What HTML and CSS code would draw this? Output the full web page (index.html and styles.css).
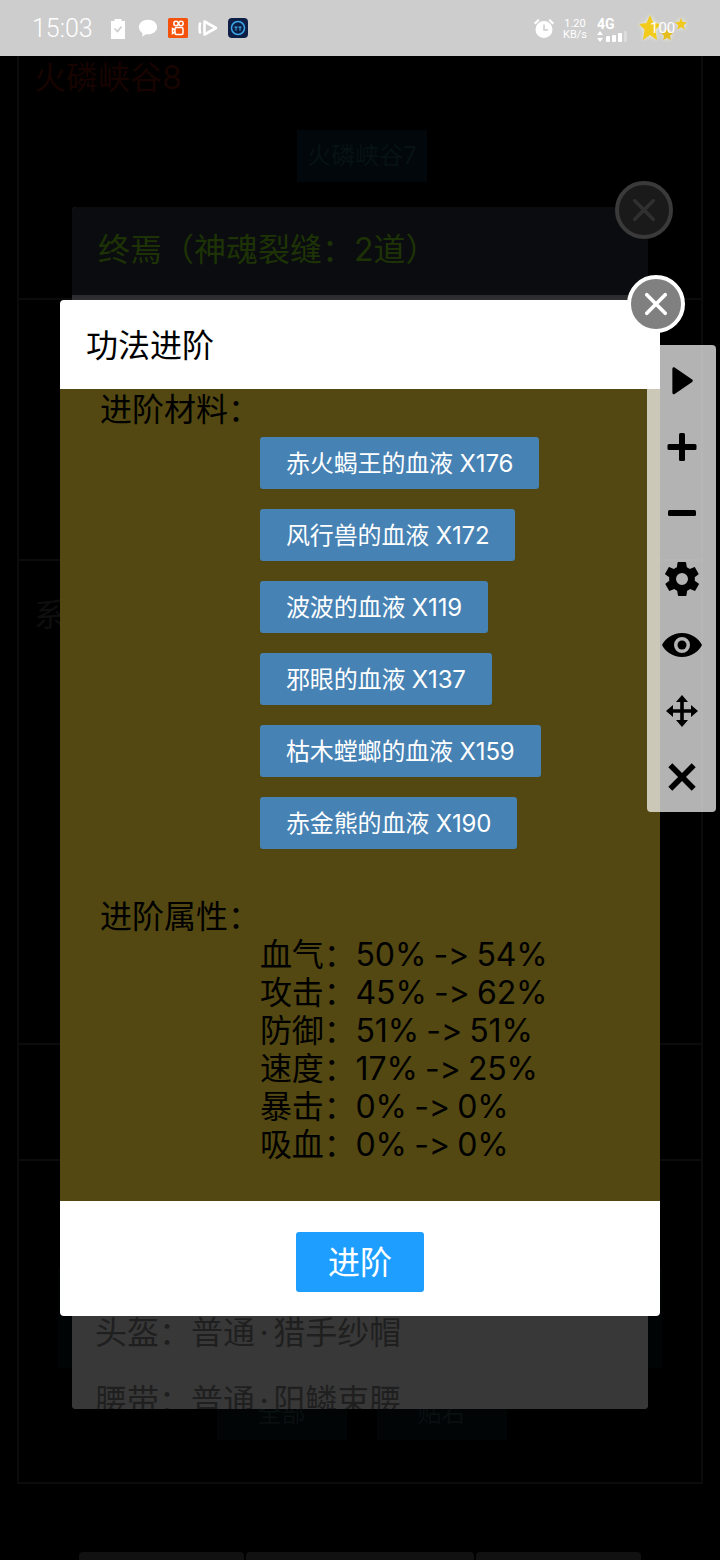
FILE: index.html
```html
<!DOCTYPE html>
<html lang="zh-CN">
<head>
    <meta charset="UTF-8">
    <meta name="viewport" content="width=device-width, initial-scale=1.0">
    <title>功法进阶</title>
    <link rel="stylesheet" href="styles.css">
</head>
<body>

    <!-- Status bar -->
    <div class="status-bar">
        <div class="status-left">
            <span class="clock">15:03</span>
            <svg class="st-icon" width="18" height="21" viewBox="0 0 18 21"><path fill="#fff" d="M1 3h3.500V1h7v2H15v18H1z"/><path fill="none" stroke="#cdcdcd" stroke-width="1.600" d="M4.500 10.500l3 3 4-5"/></svg>
            <svg class="st-icon" width="20" height="20" viewBox="0 0 22 20"><path fill="#fff" d="M11 1c5.700 0 10 3.500 10 8s-4.300 8-10 8c-.8 0-1.500-.1-2.200-.2L4.500 19.500l.6-3.800C2.500 14.200 1 11.800 1 9c0-4.500 4.300-8 10-8z"/></svg>
            <svg class="st-icon" width="20" height="20" viewBox="0 0 20 20"><rect width="20" height="20" rx="1.500" fill="#f4510b"/><g fill="none" stroke="#fff" stroke-width="1.500"><circle cx="8" cy="5.500" r="2.200"/><circle cx="13" cy="5.500" r="2.200"/><rect x="7" y="9.500" width="8" height="7" rx="1.500"/><path d="M7 12l-2.500-1.500v5L7 14"/></g></svg>
            <svg class="st-icon" width="20" height="20" viewBox="0 0 20 20"><path fill="none" stroke="#fff" stroke-width="2.600" stroke-linejoin="round" d="M6.500 3.500L18 10 6.500 16.500z"/><path fill="none" stroke="#fff" stroke-width="2.500" d="M2.200 4.500c-.8 3.500-.8 7.500 0 11"/></svg>
            <svg class="st-icon" width="20" height="20" viewBox="0 0 20 20"><rect width="20" height="20" rx="4" fill="#0e1f47"/><circle cx="10" cy="10" r="6.500" fill="none" stroke="#3ba7e6" stroke-width="1.500"/><path fill="#3ba7e6" d="M6.500 8.500h3v1.200h-1v3h-1v-3h-1zM10.500 8.500h3v1.200h-1v3h-1v-3h-1z"/></svg>
        </div>
        <div class="status-right">
            <svg class="st-icon" width="22" height="22" viewBox="0 0 22 22"><circle cx="11" cy="12.500" r="8.500" fill="#fff"/><path fill="none" stroke="#cdcdcd" stroke-width="1.500" d="M11 7.500v5.500h4"/><path fill="#fff" d="M1 6l4-4 1.500 1.500-4 4zM21 6l-4-4-1.500 1.500 4 4z"/></svg>
            <div class="net-speed"><span>1.20</span><span class="net-unit">KB/s</span></div>
            <div class="net-type">
                <span>4G</span>
                <svg width="30" height="12" viewBox="0 0 30 12"><path fill="#fff" d="M3 0l3 4H0zM3 11L0 7h6z"/><rect x="9" y="5" width="4" height="6" rx="1" fill="#fff"/><rect x="15" y="4" width="4" height="7" rx="1" fill="#fff"/><rect x="21" y="2" width="4" height="9" rx="1" fill="#fff"/><rect x="27" y="0" width="3" height="11" rx="1" fill="#dcdcdc"/></svg>
            </div>
            <div class="stars">
                <svg width="48" height="28" viewBox="0 0 48 28">
                    <path fill="#f2cb1c" d="M11 1l3.500 8 7.500 1-5.500 5.500L18 26l-7-5-7 5 1.500-10.500L0 10l7.500-1z"/>
                    <path fill="#e6bd1e" d="M28 15l1.800 3.500 4.200.5-3 2.700.8 4.300-3.800-2-3.800 2 .8-4.300-3-2.700 4.200-.5z"/>
                    <path fill="#f0c81e" d="M42 4l1.600 3.800 4.400.4-3.300 3 1 4.300-3.700-2.300-3.700 2.300 1-4.300-3.300-3 4.400-.4z"/>
                </svg>
                <span class="stars-num">100</span>
            </div>
        </div>
    </div>

    <!-- Page behind the dialogs -->
    <div class="page">
        <div class="page-row row-title">
            <h2 class="map-name">火磷峡谷8</h2>
            <div class="map-btn">火磷峡谷7</div>
        </div>
        <div class="page-row row-b"></div>
        <div class="page-row row-c"><span class="row-label">系</span></div>
        <div class="page-row row-d"></div>
        <div class="page-row row-e">
            <div class="teal-bar"></div>
            <div class="page-actions">
                <div class="map-btn">全部</div>
                <div class="map-btn">贴右</div>
            </div>
        </div>
    </div>
    <div class="tab-bar">
        <span class="tab tab-side"></span>
        <span class="tab tab-mid"></span>
        <span class="tab tab-side"></span>
    </div>

    <!-- Skill detail dialog, dimmed -->
    <div class="detail-dialog">
        <div class="detail-head">终焉（神魂裂缝：2道）</div>
        <div class="detail-body">
            <div class="gear-row">头盔：普通 · 猎手纱帽</div>
            <div class="gear-row">腰带：普通 · 阳鳞束腰</div>
        </div>
    </div>
    <div class="close close-dim"><svg width="24" height="24" viewBox="0 0 26 26"><path d="M3 3l20 20M23 3L3 23"/></svg></div>

    <!-- Upgrade dialog -->
    <div class="dialog">
        <div class="dialog-title">功法进阶</div>
        <div class="dialog-body">
            <div class="section-label">进阶材料：</div>
            <div class="materials">
                <div class="material">赤火蝎王的血液 X176</div>
                <div class="material">风行兽的血液 X172</div>
                <div class="material">波波的血液 X119</div>
                <div class="material">邪眼的血液 X137</div>
                <div class="material">枯木螳螂的血液 X159</div>
                <div class="material">赤金熊的血液 X190</div>
            </div>
            <div class="section-label">进阶属性：</div>
            <div class="stats">
                <div>血气：50% -&gt; 54%</div>
                <div>攻击：45% -&gt; 62%</div>
                <div>防御：51% -&gt; 51%</div>
                <div>速度：17% -&gt; 25%</div>
                <div>暴击：0% -&gt; 0%</div>
                <div>吸血：0% -&gt; 0%</div>
            </div>
        </div>
        <div class="dialog-foot">
            <button class="upgrade-btn">进阶</button>
        </div>
    </div>
    <div class="close"><svg width="24" height="24" viewBox="0 0 26 26"><path d="M3 3l20 20M23 3L3 23"/></svg></div>

    <!-- Floating tool panel -->
    <div class="tool-panel">
        <svg width="36" height="36" viewBox="0 0 36 36"><path d="M8 6.500c0-1.500 1.300-2.200 2.500-1.500l19 12c1 .6 1 1.800 0 2.400l-19 12c-1.200.7-2.500 0-2.500-1.500z" transform="translate(1 -.5) scale(.92 1)"/></svg>
        <svg width="36" height="36" viewBox="0 0 36 36"><rect x="15" y="4" width="6" height="28" rx="1.500"/><rect x="3.500" y="15" width="29" height="6" rx="1.500"/></svg>
        <svg width="36" height="36" viewBox="0 0 36 36"><rect x="4" y="15" width="28" height="6" rx="1.500"/></svg>
        <svg width="36" height="36" viewBox="1.500 1.500 21 21"><path d="M19.400 13c.1-.3.100-.7.100-1s0-.7-.1-1l2.100-1.600c.2-.2.200-.4.100-.6l-2-3.500c-.1-.2-.4-.3-.6-.2l-2.500 1c-.5-.4-1.100-.7-1.700-1l-.4-2.600c0-.3-.2-.4-.5-.4h-4c-.3 0-.5.100-.5.400l-.4 2.600c-.6.300-1.200.6-1.700 1l-2.500-1c-.2-.1-.5 0-.6.200l-2 3.500c-.1.200-.1.400.1.600L4.600 11c-.1.300-.1.700-.1 1s0 .7.100 1l-2.100 1.600c-.2.200-.2.400-.1.600l2 3.500c.1.200.4.300.6.200l2.500-1c.5.400 1.100.7 1.700 1l.4 2.600c0 .3.200.4.500.4h4c.3 0 .5-.1.500-.4l.4-2.600c.6-.3 1.200-.6 1.700-1l2.500 1c.2.100.5 0 .6-.2l2-3.500c.1-.2.100-.4-.1-.6zM12 15.500a3.500 3.500 0 1 1 0-7 3.500 3.500 0 0 1 0 7z"/></svg>
        <svg width="42" height="36" viewBox="0 0 42 36"><path fill-rule="evenodd" d="M21 6C11.500 6 4 12 1 18c3 6 10.500 12 20 12s17-6 20-12c-3-6-10.500-12-20-12zm0 20a8 8 0 1 1 0-16 8 8 0 0 1 0 16z"/><circle cx="21" cy="18" r="4.500"/></svg>
        <svg width="36" height="36" viewBox="0 0 36 36"><path d="M16.200 6h3.600v10.200H30v3.600H19.800V30h-3.600V19.800H6v-3.600h10.200z"/><path d="M18 2l6 7H12zM18 34l-6-7h12zM2 18l7-6v12zM34 18l-7 6V12z"/></svg>
        <svg width="36" height="36" viewBox="0 0 36 36"><path d="M6 9.500L9.500 6 18 14.500 26.500 6 30 9.500 21.500 18 30 26.500 26.500 30 18 21.500 9.500 30 6 26.500 14.500 18z" transform="translate(-2.500 -2.500) scale(1.140)"/></svg>
    </div>

</body>
</html>
```

FILE: styles.css
```css
/* General Styles */
* {
    box-sizing: border-box;
}

body {
    margin: 0;
    width: 720px;
    height: 1560px;
    position: relative;
    overflow: hidden;
    background: #000;
    color: #000;
    font-family: Inter, "Noto Sans CJK SC", sans-serif;
    font-variant-ligatures: none;
    font-feature-settings: "calt" 0;
}

/* Status bar */
.status-bar {
    height: 56px;
    background: #cdcdcd;
    color: #fff;
    font-family: Roboto, sans-serif;
    display: flex;
    justify-content: space-between;
    align-items: center;
    padding: 0 33px 0 32px;
}

.status-left,
.status-right {
    display: flex;
    align-items: center;
}

.status-left {
    gap: 10px;
}

.clock {
    font-size: 25px;
    font-weight: 300;
    margin-right: 7px;
}

.net-speed {
    display: flex;
    flex-direction: column;
    font-size: 11px;
    line-height: 11px;
    margin: 2px 10px 0 8px;
    align-items: center;
}

.net-type {
    display: flex;
    flex-direction: column;
    font-size: 14px;
    font-weight: 700;
    line-height: 13px;
    width: 32px;
    margin-top: 4px;
}

.net-type svg {
    display: block;
}

.stars {
    position: relative;
    width: 48px;
    height: 28px;
    margin-left: 10px;
}

.stars svg {
    filter: drop-shadow(0 0 2px rgba(255, 255, 230, 0.8));
}

.stars-num {
    position: absolute;
    left: 11px;
    top: 4px;
    font-size: 15px;
    line-height: 20px;
}

/* Page behind the dialogs */
.page {
    margin: 0 17px;
    height: 1428px;
    border: 2px solid #0b0b0b;
    border-top: 0;
}

.page-row {
    border-bottom: 2px solid #0b0b0b;
}

.row-title {
    height: 244px;
    padding: 4px 0 0;
}

.row-b {
    height: 261px;
}

.row-c {
    height: 484px;
    padding: 32px 0 0 15px;
}

.row-d {
    height: 116px;
}

.row-e {
    border-bottom: 0;
    height: 321px;
    padding: 107px 0 0;
}

.map-name {
    margin: 0;
    padding-left: 15px;
    font-size: 32px;
    line-height: 36px;
    font-weight: 400;
    color: #170400;
}

.row-label {
    font-size: 32px;
    line-height: 44px;
    color: #0e0e0e;
}

.map-btn {
    width: 130px;
    height: 52px;
    margin: 34px 0 0 278px;
    background: #01070a;
    color: #071214;
    font-size: 24px;
    line-height: 52px;
    text-align: center;
}

.teal-bar {
    height: 100px;
    margin: 0 39px;
    background: #010405;
}

.page-actions {
    display: flex;
    justify-content: center;
    gap: 30px;
    margin-top: 20px;
    padding-left: 3px;
}

.page-actions .map-btn {
    margin: 0;
    background: #010506;
    color: #0a0f10;
}

.tab-bar {
    display: flex;
    justify-content: center;
    gap: 2px;
    margin-top: 68px;
}

.tab {
    height: 8px;
    background: #111;
    border-radius: 4px 4px 0 0;
}

.tab-side {
    width: 165px;
}

.tab-mid {
    width: 228px;
}

/* Skill detail dialog */
.detail-dialog {
    position: absolute;
    left: 72px;
    top: 207px;
    width: 576px;
    height: 1202px;
    overflow: hidden;
    border-radius: 4px;
    background: #393939;
}

.detail-head {
    height: 88px;
    padding: 0 26px;
    background: #0a0c10;
    color: #1e3305;
    font-size: 32px;
    line-height: 86px;
}

.detail-body {
    padding: 1004px 23px 0;
    background: linear-gradient(#2b2b2e, #383838 12px);
}

.gear-row {
    font-size: 32px;
    line-height: 68px;
    color: #1f1f1f;
    word-spacing: -4.5px;
}

/* Close buttons */
.close {
    position: absolute;
    left: 627px;
    top: 275px;
    width: 58px;
    height: 58px;
    border-radius: 50%;
    background: #808080;
    border: 4px solid #fff;
    display: flex;
    align-items: center;
    justify-content: center;
}

.close svg {
    fill: none;
    stroke: #fff;
    stroke-width: 4;
    stroke-linecap: round;
}

.close-dim {
    left: 615px;
    top: 181px;
    background: #1a1a1a;
    border-color: #3a3a3a;
}

.close-dim svg {
    stroke: #303030;
}

/* Upgrade dialog */
.dialog {
    position: absolute;
    left: 60px;
    top: 300px;
    width: 600px;
    height: 1016px;
    border-radius: 4px;
    background: #fff;
    overflow: hidden;
}

.dialog-title {
    height: 89px;
    padding-left: 26px;
    font-size: 32px;
    line-height: 92px;
}

.dialog-body {
    height: 812px;
    background: #534811;
    padding: 2px 0 0 40px;
}

.section-label {
    font-size: 32px;
    line-height: 38px;
}

.materials {
    margin: 8px 0 0 160px;
    height: 461px;
}

.material {
    width: fit-content;
    height: 52px;
    margin-bottom: 20px;
    padding: 0 26px;
    border-radius: 3px;
    background: #4682b4;
    color: #fff;
    font-size: 24px;
    line-height: 53px;
    letter-spacing: -0.15px;
}

.stats {
    margin-left: 160px;
    font-size: 32px;
    line-height: 38px;
    letter-spacing: -0.15px;
    word-spacing: -1.5px;
}

.dialog-foot {
    display: flex;
    justify-content: center;
    padding-top: 31px;
}

.upgrade-btn {
    width: 128px;
    height: 60px;
    border: none;
    border-radius: 3px;
    background: #1e9fff;
    color: #fff;
    font-family: inherit;
    font-size: 32px;
    padding: 0 0 5px;
}

/* Floating tool panel */
.tool-panel {
    position: absolute;
    left: 647px;
    top: 345px;
    width: 69px;
    height: 467px;
    border-radius: 4px;
    background: rgba(255, 255, 255, 0.7);
    display: flex;
    flex-direction: column;
    align-items: center;
    justify-content: space-between;
    padding: 18px 0 17px;
}

.tool-panel svg {
    display: block;
    fill: #000;
}
```
